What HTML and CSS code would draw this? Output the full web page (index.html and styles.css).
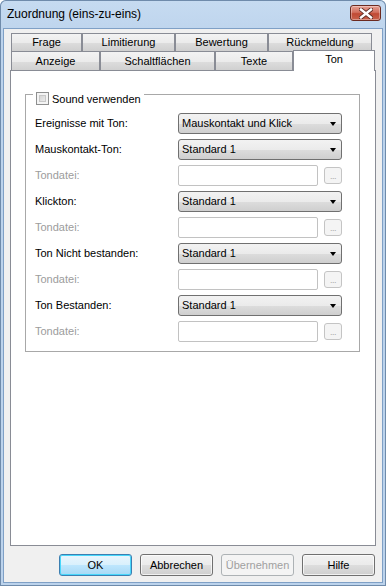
FILE: index.html
```html
<!DOCTYPE html>
<html lang="de">
<head>
  <meta charset="UTF-8">
  <meta name="viewport" content="width=device-width, initial-scale=1.0">
  <title>Zuordnung (eins-zu-eins)</title>
  <link rel="stylesheet" href="styles.css">
</head>
<body>
  <div class="window">
    <div class="titlebar">
      <span class="title">Zuordnung (eins-zu-eins)</span>
      <button class="close" aria-label="Schließen">
        <svg width="14" height="11" viewBox="0 0 14 11">
          <path d="M2 1.5 L12 9.5 M12 1.5 L2 9.5" stroke="#5a2a22" stroke-width="4.2" stroke-linecap="square"/>
          <path d="M2 1.5 L12 9.5 M12 1.5 L2 9.5" stroke="#fff" stroke-width="2.4" stroke-linecap="square"/>
        </svg>
      </button>
    </div>

    <div class="client">
      <div class="tabs">
        <div class="tab-row back">
          <div class="tab">Frage</div>
          <div class="tab">Limitierung</div>
          <div class="tab">Bewertung</div>
          <div class="tab">Rückmeldung</div>
        </div>
        <div class="tab-row front">
          <div class="tab">Anzeige</div>
          <div class="tab">Schaltflächen</div>
          <div class="tab">Texte</div>
          <div class="tab active">Ton</div>
        </div>
      </div>

      <div class="panel">
        <div class="group">
          <div class="group-title">
            <span class="checkbox"></span>
            <span>Sound verwenden</span>
          </div>
          <div class="form">
            <label>Ereignisse mit Ton:</label>
            <div class="combo">Mauskontakt und Klick<span class="arrow"></span></div>

            <label>Mauskontakt-Ton:</label>
            <div class="combo">Standard 1<span class="arrow"></span></div>

            <label class="disabled">Tondatei:</label>
            <div class="file"><div class="textbox"></div><div class="browse">...</div></div>

            <label>Klickton:</label>
            <div class="combo">Standard 1<span class="arrow"></span></div>

            <label class="disabled">Tondatei:</label>
            <div class="file"><div class="textbox"></div><div class="browse">...</div></div>

            <label>Ton Nicht bestanden:</label>
            <div class="combo">Standard 1<span class="arrow"></span></div>

            <label class="disabled">Tondatei:</label>
            <div class="file"><div class="textbox"></div><div class="browse">...</div></div>

            <label>Ton Bestanden:</label>
            <div class="combo">Standard 1<span class="arrow"></span></div>

            <label class="disabled">Tondatei:</label>
            <div class="file"><div class="textbox"></div><div class="browse">...</div></div>
          </div>
        </div>
      </div>

      <div class="buttons">
        <button class="btn default">OK</button>
        <button class="btn">Abbrechen</button>
        <button class="btn" disabled>Übernehmen</button>
        <button class="btn">Hilfe</button>
      </div>
    </div>
  </div>
</body>
</html>
```

FILE: styles.css
```css
body {
  margin: 0;
  font-family: "Liberation Sans", Arial, sans-serif;
  font-size: 11px;
  color: #000;
  background-color: #fff;
}

.window {
  width: 386px;
  height: 586px;
  box-sizing: border-box;
  display: flex;
  flex-direction: column;
  background: linear-gradient(#c6dbf1, #bcd3ec 40px, #bcd3ec);
  border-radius: 6px 6px 0 0;
  box-shadow: inset 0 0 0 1px #6f8bab;
}

.titlebar {
  height: 29px;
  flex: none;
  display: flex;
  align-items: flex-start;
  justify-content: space-between;
  padding: 0 5px 0 7px;
}

.title {
  font-size: 12px;
  line-height: 12px;
  margin-top: 8px;
}

.close {
  width: 31px;
  height: 16px;
  margin-top: 5px;
  padding: 0;
  display: flex;
  align-items: center;
  justify-content: center;
  border: 1px solid #6b2a20;
  border-radius: 3px;
  background: linear-gradient(#e6a093, #d2705e 45%, #c04a34 55%, #c9624c);
  box-shadow: inset 0 0 0 1px rgba(255, 255, 255, 0.35);
}

.client {
  flex: 1;
  margin: 0 4px 4px;
  padding: 4px 6px 6px;
  display: flex;
  flex-direction: column;
  background-color: #f0f0f0;
  box-shadow: 0 0 0 1px #7fa0c6;
}

/* tabs */

.tabs {
  height: 37px;
  flex: none;
}

.tab-row {
  display: grid;
  margin-left: 1px;
}

.tab-row.back {
  height: 18px;
  grid-template-columns: 71px 93px 93px 104px;
}

.tab-row.front {
  height: 19px;
  grid-template-columns: 89px 115px 78px 82px;
}

.tab {
  box-sizing: border-box;
  border: 1px solid #898c95;
  border-bottom: none;
  background: linear-gradient(#f3f3f3, #ebebeb 50%, #dddddd 51%, #cfcfcf);
  text-align: center;
  line-height: 17px;
}

.tab-row.front .tab {
  line-height: 19px;
}

.tab-row.front .tab.active {
  position: relative;
  z-index: 1;
  margin-top: -1px;
  height: 21px;
  background: #fff;
  line-height: 17px;
}

.panel {
  height: 476px;
  flex: none;
  box-sizing: border-box;
  border: 1px solid #898c95;
  background-color: #fff;
  padding: 23px 15px 0 14px;
}

/* group box */

.group {
  border: 1px solid #a8a8a8;
  padding: 0 17px 9px 9px;
}

.group-title {
  display: flex;
  align-items: center;
  gap: 3px;
  width: fit-content;
  height: 13px;
  margin: -3px 0 0 -2px;
  padding: 0 3px;
  background-color: #fff;
}

.checkbox {
  width: 13px;
  height: 13px;
  box-sizing: border-box;
  border: 1px solid #8e8f8f;
  background: linear-gradient(135deg, #cbcbcb, #f6f6f6);
  box-shadow: inset 0 0 0 2px #f4f4f4, inset 0 0 0 3px #c8c8c8;
}

.form {
  margin-top: 8px;
  display: grid;
  grid-template-columns: 143px 164px;
  grid-auto-rows: 21px;
  row-gap: 5px;
}

.form label {
  align-self: center;
  margin-top: -2px;
}

.form label.disabled {
  color: #9c9c9c;
}

.combo {
  position: relative;
  box-sizing: border-box;
  border: 1px solid #707070;
  border-radius: 3px;
  background: linear-gradient(#f2f2f2, #ebebeb 50%, #dddddd 51%, #cfcfcf);
  padding-left: 3px;
  line-height: 19px;
}

.arrow {
  position: absolute;
  right: 5px;
  top: 8px;
  border-left: 3.5px solid transparent;
  border-right: 3.5px solid transparent;
  border-top: 4px solid #000;
}

.file {
  display: flex;
  align-items: center;
  justify-content: space-between;
}

.textbox {
  width: 140px;
  height: 21px;
  box-sizing: border-box;
  border: 1px solid #c2c2c2;
  border-radius: 2px;
  background-color: #fff;
}

.browse {
  width: 18px;
  height: 17px;
  box-sizing: border-box;
  border: 1px solid #c4c4c4;
  border-radius: 3px;
  background-color: #f4f4f4;
  color: #a8a8a8;
  font-size: 9px;
  line-height: 17px;
  text-align: center;
  letter-spacing: -0.5px;
}

/* dialog buttons */

.buttons {
  margin-top: 8px;
  display: flex;
  justify-content: flex-end;
  gap: 8px;
  padding-right: 1px;
}

.btn {
  width: 73px;
  height: 22px;
  padding: 0;
  font-family: inherit;
  font-size: 11px;
  color: #000;
  border: 1px solid #707070;
  border-radius: 3px;
  background: linear-gradient(#f2f2f2, #ebebeb 50%, #dddddd 51%, #cfcfcf);
  box-shadow: inset 0 0 0 1px rgba(255, 255, 255, 0.7);
}

.btn.default {
  border-color: #3c7fb1;
  background: linear-gradient(#eaf6fd, #d9f0fc 50%, #bee6fd 51%, #a7d9f5);
  box-shadow: inset 0 0 0 1px #48d7fb;
}

.btn:disabled {
  color: #a0a0a0;
  border-color: #adb2b5;
  background: #f4f4f4;
  box-shadow: none;
}
```
